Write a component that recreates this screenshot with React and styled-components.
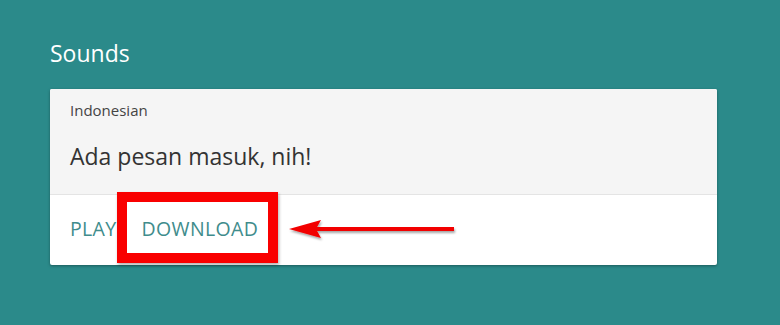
import React from 'react';
import styled, { createGlobalStyle } from 'styled-components';

const GlobalStyle = createGlobalStyle`
	html, body {
		margin: 0;
		padding: 0;
		background: #2b8a8a;
		font-family: "Open Sans", "Noto Sans", sans-serif;
	}
`;

const Page = styled.div`
	position: relative;
	width: 780px;
	height: 325px;
	padding: 38px 63px 0 50px;
	box-sizing: border-box;
	overflow: hidden;
`;

const Title = styled.h2`
	margin: 0 0 21px;
	font-size: 23px;
	font-weight: 400;
	color: #fff;
	line-height: 30px;
`;

const Card = styled.div`
	background: #fff;
	border-radius: 2px;
	box-shadow: 0 1px 3px rgba(0, 0, 0, 0.35);
	overflow: hidden;
`;

const Header = styled.div`
	background: #f5f5f5;
	border-bottom: 1px solid #e4e4e4;
	padding: 10px 20px 21px;
`;

const Lang = styled.div`
	font-size: 15px;
	color: #444;
	line-height: 22px;
`;

const Phrase = styled.div`
	margin-top: 18px;
	font-size: 23px;
	color: #333;
	line-height: 34px;
`;

const Actions = styled.div`
	display: flex;
	gap: 25px;
	padding: 20px 20px 22px;
`;

const Action = styled.button`
	border: 0;
	background: none;
	padding: 0;
	font-family: inherit;
	font-size: 19.5px;
	color: #408c8c;
	line-height: 28px;
	letter-spacing: 0.35px;
	cursor: pointer;
`;

const Highlight = styled.div`
	position: absolute;
	left: 117px;
	top: 192px;
	width: 161px;
	height: 71px;
	border: 10px solid #f90000;
	box-sizing: border-box;
	box-shadow: 1px 2px 3px rgba(0, 0, 0, 0.3);
`;

const Arrow = styled.svg`
	position: absolute;
	left: 286px;
	top: 216px;
	overflow: visible;
`;

export default function App() {
	return (
		<>
			<GlobalStyle />
			<Page>
				<Title>Sounds</Title>
				<Card>
					<Header>
						<Lang>Indonesian</Lang>
						<Phrase>Ada pesan masuk, nih!</Phrase>
					</Header>
					<Actions>
						<Action>PLAY</Action>
						<Action>DOWNLOAD</Action>
					</Actions>
				</Card>
				<Highlight />
				<Arrow width="172" height="28" viewBox="0 0 172 28">
					<defs>
						<filter id="sh" x="-10%" y="-50%" width="120%" height="200%">
							<feDropShadow dx="1" dy="2" stdDeviation="1.2" floodColor="#000" floodOpacity="0.35" />
						</filter>
					</defs>
					<g filter="url(#sh)">
						<rect x="30" y="11" width="138" height="4" fill="#f20000" />
						<polygon points="3,13 35,4 30,13 35,22" fill="#f20000" />
					</g>
				</Arrow>
			</Page>
		</>
	);
}
